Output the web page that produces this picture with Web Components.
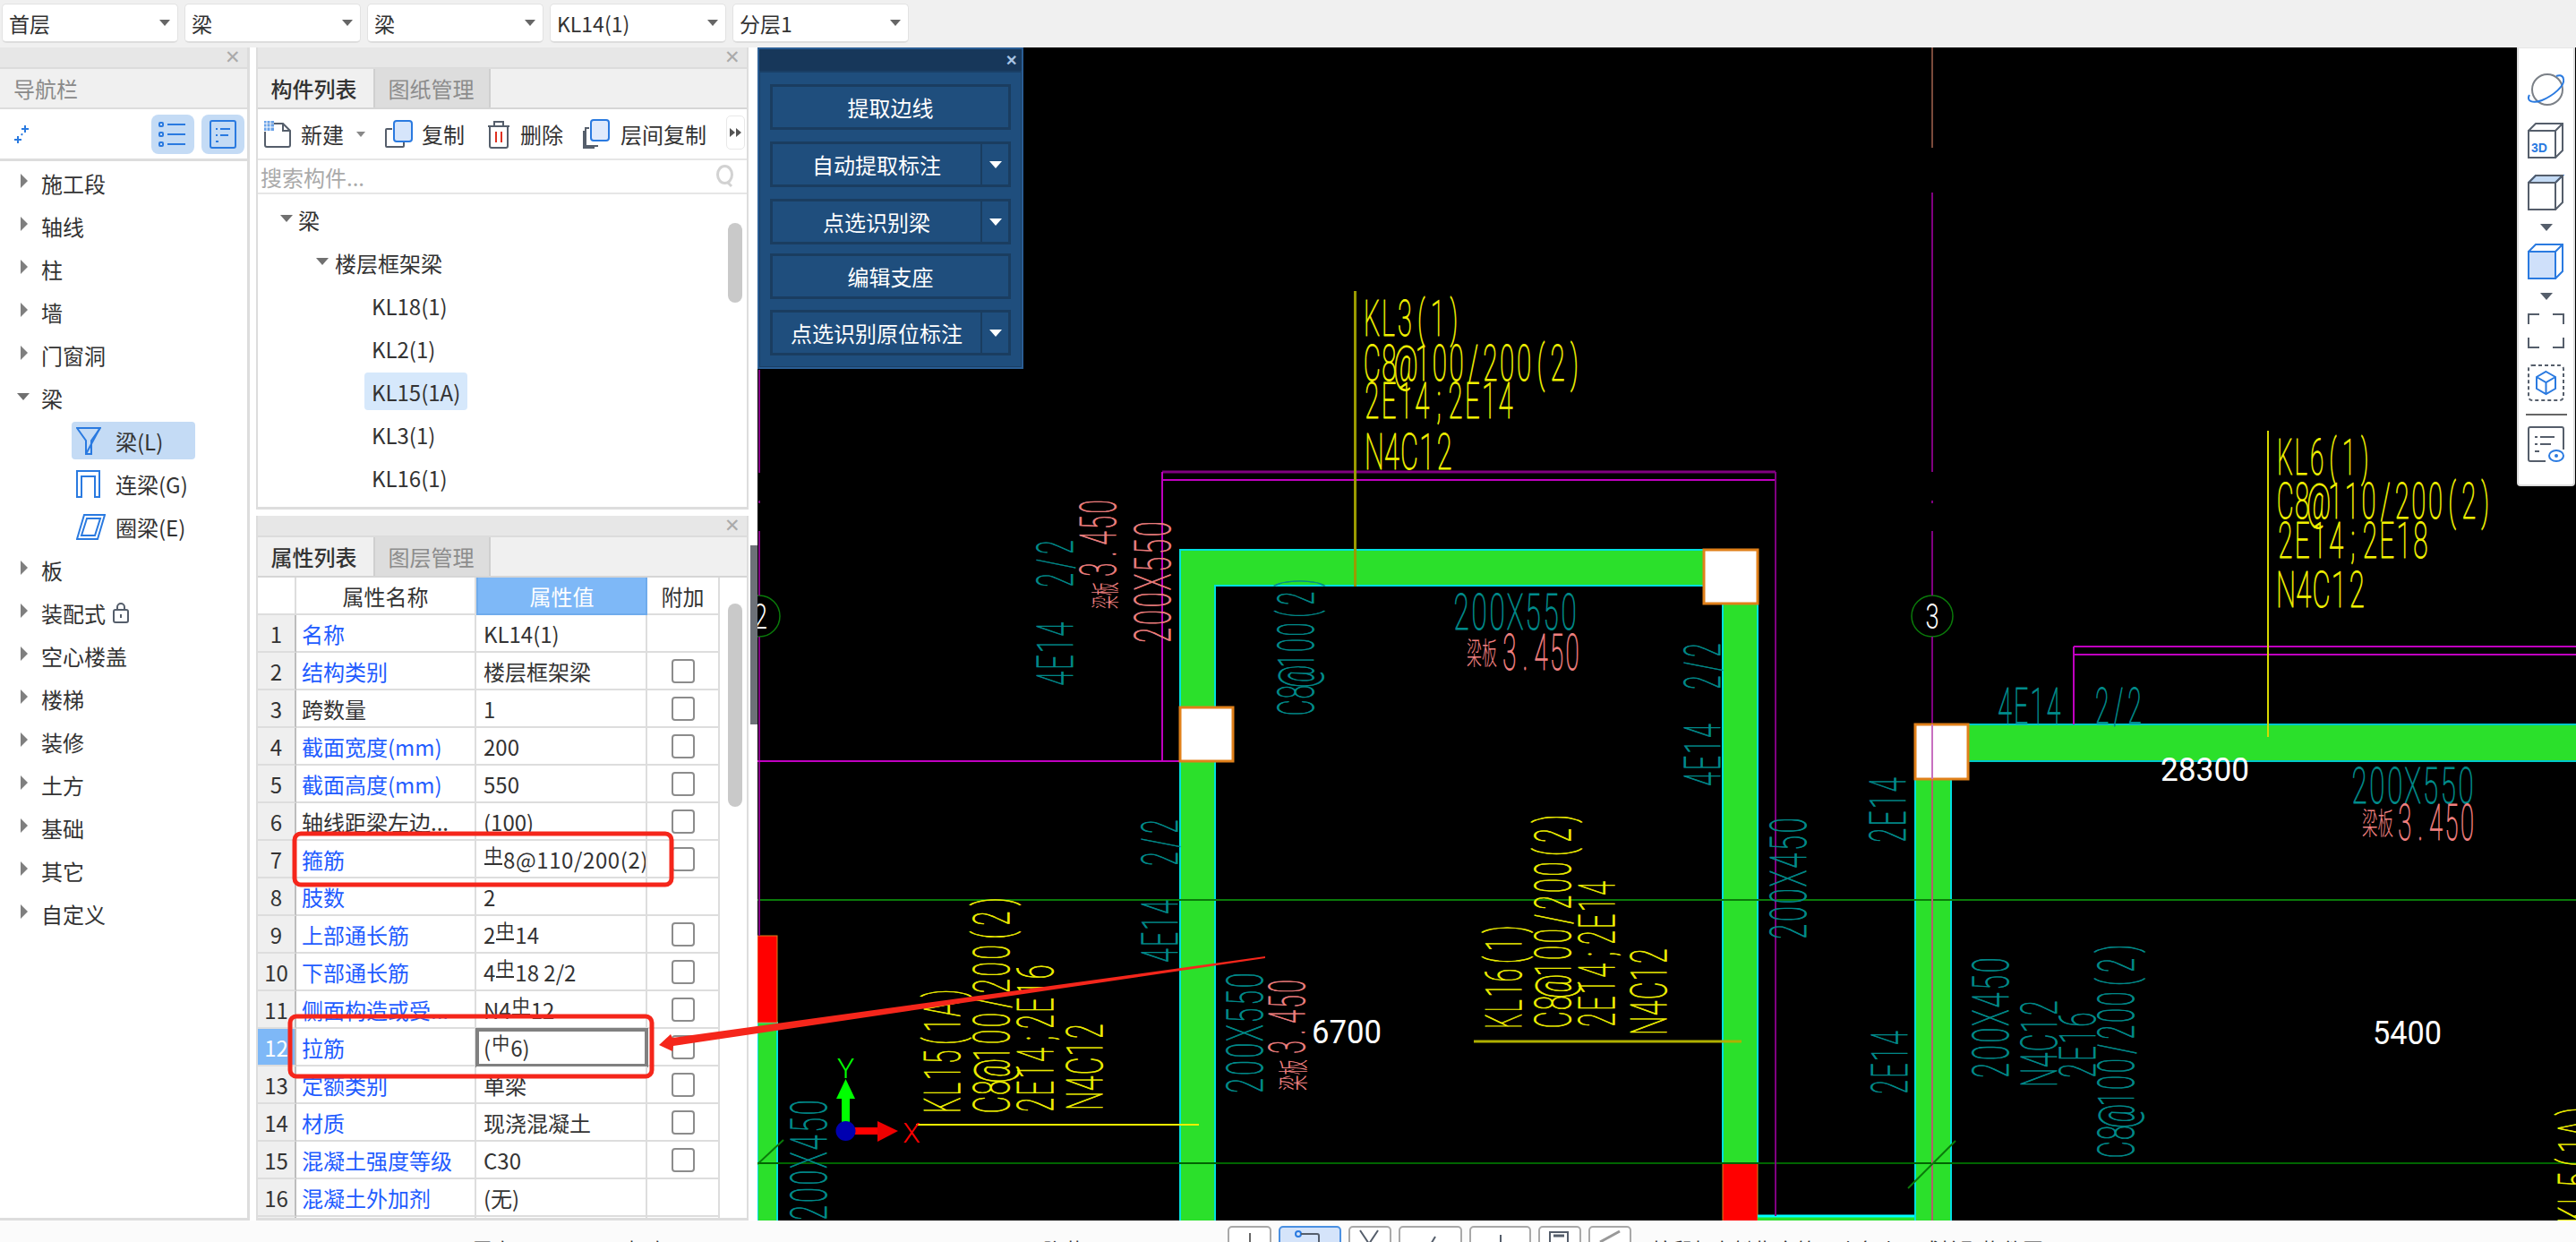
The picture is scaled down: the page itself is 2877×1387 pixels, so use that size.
<!DOCTYPE html>
<html lang="zh"><head><meta charset="utf-8"><title>GTJ</title>
<style>
html,body{margin:0;padding:0;width:2877px;height:1387px;overflow:hidden;background:#fff;font-family:"Noto Sans CJK SC","Liberation Sans",sans-serif;color:#333;}
</style></head><body>
<gtj-app>
  <gtj-topbar slot="top">
    <gtj-select>首层</gtj-select><gtj-select>梁</gtj-select><gtj-select>梁</gtj-select><gtj-select>KL14(1)</gtj-select><gtj-select>分层1</gtj-select>
  </gtj-topbar>
  <gtj-nav slot="nav"></gtj-nav>
  <gtj-mid slot="mid">
    <gtj-panel tabs="构件列表,图纸管理" style="height:516px;flex:none">
      <gtj-toolbar></gtj-toolbar>
      <gtj-search></gtj-search>
      <gtj-comp-tree></gtj-comp-tree>
    </gtj-panel>
    <gtj-panel tabs="属性列表,图层管理" style="flex:1;min-height:0">
      <gtj-prop-table></gtj-prop-table>
    </gtj-panel>
  </gtj-mid>
  <gtj-rail slot="rail"></gtj-rail>
  <gtj-canvas slot="canvas">
    <gtj-float-panel></gtj-float-panel>
    <gtj-view-strip></gtj-view-strip>
  </gtj-canvas>
  <gtj-status slot="status"></gtj-status>
  <gtj-annotations slot="over"></gtj-annotations>
</gtj-app>
<script>
const FONT='"Noto Sans CJK SC","Liberation Sans",sans-serif';
const INK='#555e6b',BLUE='#2a7ae0';
function shadow(el,html){el.attachShadow({mode:'open'}).innerHTML=html;return el.shadowRoot;}
const def=(n,c)=>customElements.define(n,c);

def('gtj-app',class extends HTMLElement{connectedCallback(){shadow(this,`<style>
:host{display:grid;position:relative;width:2877px;height:1387px;overflow:hidden;background:#fff;grid-template-columns:279px 7px 550px 10px 2031px;grid-template-rows:53px 1310px 24px;font:23px ${FONT};color:#333}
::slotted([slot=top]){grid-column:1/-1;grid-row:1}
::slotted([slot=nav]){grid-column:1;grid-row:2}
::slotted([slot=mid]){grid-column:3;grid-row:2}
::slotted([slot=rail]){grid-column:4;grid-row:2}
::slotted([slot=canvas]){grid-column:5;grid-row:2}
::slotted([slot=status]){grid-column:1/-1;grid-row:3}
</style><slot name="top"></slot><slot name="nav"></slot><slot name="mid"></slot><slot name="rail"></slot><slot name="canvas"></slot><slot name="status"></slot><slot name="over"></slot>`)}});

def('gtj-topbar',class extends HTMLElement{connectedCallback(){shadow(this,`<style>:host{display:flex;gap:7px;background:#f0f0f0;padding:4px 0 0 2px;box-sizing:border-box;height:53px}</style><slot></slot>`)}});
def('gtj-select',class extends HTMLElement{connectedCallback(){shadow(this,`<style>:host{display:flex;align-items:center;box-sizing:border-box;width:197px;height:44px;background:#fff;border:1px solid #e2e2e2;border-bottom:2px solid #ddd;border-radius:5px;padding:0 8px 0 7px;justify-content:space-between;font:23px ${FONT};color:#333}
i{width:0;height:0;border:6px solid transparent;border-top:7px solid #666;border-bottom:0;margin-right:0}</style><slot></slot><i></i>`)}});

const NAVICONS={
 l:`<svg width="28" height="31" viewBox="0 0 28 31" fill="none" stroke="${BLUE}" stroke-width="2"><path d="M1 1H27L17 15V30H11V15Z"/><path d="M26 2 11 30"/></svg>`,
 g:`<svg width="27" height="31" viewBox="0 0 27 31" fill="none" stroke="${BLUE}" stroke-width="2"><path d="M1 30V1H26V30H21V7H6V30Z"/></svg>`,
 e:`<svg width="33" height="29" viewBox="0 0 33 29" fill="none" stroke="${BLUE}" stroke-width="2"><path d="M1 28 9 1H32L24 28Z"/><path d="M6 24 12 5H27L21 24Z"/></svg>`};
const LOCK=`<svg width="18" height="23" viewBox="0 0 18 23" fill="none" stroke="${INK}" stroke-width="2" style="margin-left:8px"><rect x="1" y="8" width="16" height="14" rx="2"/><path d="M5 8V5a4 4 0 0 1 8 0v3"/><path d="M9 13v4"/></svg>`;
def('gtj-nav',class extends HTMLElement{connectedCallback(){
 const it=(t,o)=>`<gtj-tree-item arrow="${o==='open'?'open':'closed'}" style="--arrow-x:${o==='open'?19:23}px;--text-x:46px">${t}</gtj-tree-item>`;
 const sub=(k,t,s)=>`<div class="sub ${s?'sel':''}"><span class="ic">${NAVICONS[k]}</span>${t}</div>`;
 shadow(this,`<style>:host{display:flex;flex-direction:column;box-sizing:border-box;height:1310px;border-right:3px solid #ddd;border-bottom:3px solid #ddd;background:#fff;font:24px ${FONT};color:#333;overflow:hidden}
.title{height:24px;background:#e7e7e7;border-bottom:2px solid #dcdcdc;box-sizing:border-box;display:flex;justify-content:flex-end;align-items:center;padding-right:7px;color:#aaa;font:21px "Liberation Sans",sans-serif;flex:none}
.head{height:43px;background:#f0f0f0;border-bottom:2px solid #ddd;color:#8a8a8a;padding-left:15px;display:flex;align-items:center;flex:none;box-sizing:content-box}
.tb{height:55px;border-bottom:3px solid #ddd;display:flex;align-items:center;padding:0 3px 0 15px;flex:none}
.tb b{width:48px;height:44px;background:#c4dbf5;border-radius:8px;margin-left:8px;display:flex;align-items:center;justify-content:center}
.tb b:first-of-type{margin-left:auto}
.list{display:flex;flex-direction:column}
.sub{display:flex;align-items:center;height:42px;margin:3px 0 3px 80px;width:138px;border-radius:4px;padding-left:5px;box-sizing:border-box;white-space:nowrap;color:#333}
.sub.sel{background:#c4dbf5}
.ic{width:44px;flex:none;display:flex;align-items:center}
</style>
<div class="title"><span>✕</span></div>
<div class="head">导航栏</div>
<div class="tb"><svg width="18" height="22" viewBox="0 0 18 22" fill="none" stroke="${BLUE}" stroke-width="2"><path d="M13 1v8M9 5h8M5 13v8M1 17h8"/><path d="M9 12l1-2" stroke-dasharray="2 2"/></svg>
<b><svg width="32" height="32" viewBox="0 0 32 32" fill="none" stroke="${BLUE}" stroke-width="2"><rect x="1" y="3" width="4" height="4" rx="1"/><rect x="1" y="14" width="4" height="4" rx="1"/><rect x="1" y="25" width="4" height="4" rx="1"/><path d="M10 5h20M10 16h20M10 27h20"/></svg></b>
<b><svg width="30" height="32" viewBox="0 0 30 32" fill="none" stroke="${BLUE}" stroke-width="2"><rect x="1" y="1" width="28" height="30" rx="2"/><path d="M7 10h2M12 10h11M7 17h2M12 17h9M7 24h3"/></svg></b></div>
<div class="list">
${['施工段','轴线','柱','墙','门窗洞'].map(t=>it(t)).join('')}
${it('梁','open')}
${sub('l','梁(L)',1)}${sub('g','连梁(G)')}${sub('e','圈梁(E)')}
${it('板')}
<gtj-tree-item arrow="closed" style="--arrow-x:23px;--text-x:46px">装配式${LOCK}</gtj-tree-item>
${['空心楼盖','楼梯','装修','土方','基础','其它','自定义'].map(t=>it(t)).join('')}
</div>`)}});

def('gtj-tree-item',class extends HTMLElement{connectedCallback(){
 const a=this.getAttribute('arrow');
 const ar=a==='open'?`<i class="o"></i>`:a==='closed'?`<i class="c"></i>`:'';
 shadow(this,`<style>:host{display:flex;align-items:center;height:48px;flex:none;position:relative;padding-left:var(--text-x,46px);box-sizing:border-box;white-space:nowrap;font:24px ${FONT};color:#333}
i{position:absolute;left:var(--arrow-x,23px);top:50%;width:0;height:0}
.c{border:8px solid transparent;border-left:8px solid #7f7f7f;border-right:0;margin-top:-10px}
.o{border:7px solid transparent;border-top:8px solid #707070;border-bottom:0;margin-top:-5px}
.sel{background:#d6e8fb;height:42px;display:flex;align-items:center;padding:0 8px;margin-left:-8px;border-radius:4px}
</style>${ar}${this.hasAttribute('selected')?'<span class="sel"><slot></slot></span>':'<slot></slot>'}`)}});

def('gtj-mid',class extends HTMLElement{connectedCallback(){shadow(this,`<style>:host{display:flex;flex-direction:column;gap:7px;height:1310px;box-sizing:border-box;background:#fff}</style><slot></slot>`)}});

def('gtj-panel',class extends HTMLElement{connectedCallback(){
 const [a,b]=this.getAttribute('tabs').split(',');
 shadow(this,`<style>:host{display:flex;flex-direction:column;box-sizing:border-box;border:solid #ddd;border-width:0 2px 3px 2px;background:#fff;overflow:hidden;position:relative;font:24px ${FONT}}
.title{height:24px;background:#e7e7e7;border-bottom:2px solid #dcdcdc;box-sizing:border-box;display:flex;justify-content:flex-end;align-items:center;padding-right:7px;color:#aaa;font:21px "Liberation Sans",sans-serif;flex:none}
.tabs{height:45px;box-sizing:border-box;background:#f0f0f0;border-bottom:2px solid #d6d6d6;display:flex;flex:none}
.tab{width:129px;display:flex;align-items:center;justify-content:center;box-sizing:border-box;font-weight:500;color:#333;padding-right:4px}
.tab.off{width:131px;background:#ddd;color:#8c8c8c;border:solid #cfcfcf;border-width:0 2px 0 2px;font-weight:400;padding-right:2px}
</style><div class="title"><span>✕</span></div><div class="tabs"><div class="tab">${a}</div><div class="tab off">${b}</div></div><slot></slot>`)}});

const TI={
 nw:`<svg width="31" height="30" viewBox="0 0 31 30" fill="none" stroke="${INK}" stroke-width="2"><path d="M3 3H21L29 11V27a2 2 0 0 1-2 2H3a2 2 0 0 1-2-2V12"/><path d="M21 3V11H29"/><rect x="0" y="0" width="11" height="11" fill="${BLUE}" stroke="none" opacity=".7"/><path d="M0 3h11M0 7h11M3 0v11M7 0v11" stroke="#fff" stroke-width="1"/></svg>`,
 cp:`<svg width="31" height="31" viewBox="0 0 31 31" fill="none" stroke-width="2"><path d="M8 10H2a1 1 0 0 0-1 1V29a1 1 0 0 0 1 1H20a1 1 0 0 0 1-1V24" stroke="${INK}"/><rect x="10" y="1" width="20" height="23" rx="3" fill="#d6e5fb" stroke="${BLUE}"/></svg>`,
 dl:`<svg width="26" height="32" viewBox="0 0 26 32" fill="none" stroke="${INK}" stroke-width="2"><path d="M1 7H25M8 7V2H18V7M3 7V29a2 2 0 0 0 2 2H21a2 2 0 0 0 2-2V7"/><path d="M10 13V25M16 13V25" stroke="#e03020"/></svg>`,
 cc:`<svg width="30" height="33" viewBox="0 0 30 33" fill="none" stroke-width="2"><path d="M7 10H3V30H17" stroke="${INK}"/><path d="M4 14H1V32H13" stroke="${INK}"/><rect x="9" y="1" width="20" height="23" rx="3" fill="#dfeafc" stroke="${BLUE}"/></svg>`};
def('gtj-toolbar',class extends HTMLElement{connectedCallback(){shadow(this,`<style>:host{display:flex;align-items:center;height:55px;flex:none;border-bottom:2px solid #e6e6e6;padding-left:7px;font:24px ${FONT};color:#333;position:relative}
span{white-space:nowrap}
.ar{width:0;height:0;border:5px solid transparent;border-top:6px solid #888;border-bottom:0;margin-left:14px}
.more{position:absolute;left:523px;top:7px;width:21px;height:38px;box-sizing:border-box;border:1px solid #e8e8e8;border-radius:5px;display:flex;align-items:center;justify-content:center;gap:1px}
.more i{width:0;height:0;border:5px solid transparent;border-left:6px solid #555;border-right:0}
</style>${TI.nw}<span style="margin-left:10px">新建</span><i class="ar"></i><span style="margin-left:22px;display:flex">${TI.cp}</span><span style="margin-left:10px">复制</span><span style="margin-left:25px;display:flex">${TI.dl}</span><span style="margin-left:11px">删除</span><span style="margin-left:22px;display:flex">${TI.cc}</span><span style="margin-left:12px">层间复制</span><div class="more"><i></i><i></i></div>`)}});
def('gtj-search',class extends HTMLElement{connectedCallback(){shadow(this,`<style>:host{display:flex;align-items:center;justify-content:space-between;height:36px;flex:none;border-bottom:2px solid #e6e6e6;padding:0 14px 0 3px;font:24px ${FONT};color:#aaa}</style><span>搜索构件...</span><svg width="20" height="26" viewBox="0 0 20 26" fill="none" stroke="#d2d2d2" stroke-width="3"><ellipse cx="9.5" cy="11" rx="8" ry="9.5"/><path d="M13 20l4 4"/></svg>`)}});
def('gtj-comp-tree',class extends HTMLElement{connectedCallback(){
 const leaf=(t,s)=>`<gtj-tree-item style="--text-x:127px" ${s?'selected':''}>${t}</gtj-tree-item>`;
 shadow(this,`<style>:host{display:block;flex:1;min-height:0;position:relative;overflow:hidden;padding-top:4px;background:#fff}
.sb{position:absolute;left:525px;top:32px;width:16px;height:89px;border-radius:8px;background:#c9c9c9}</style>
<gtj-tree-item arrow="open" style="--arrow-x:25px;--text-x:45px">梁</gtj-tree-item>
<gtj-tree-item arrow="open" style="--arrow-x:65px;--text-x:86px">楼层框架梁</gtj-tree-item>
${leaf('KL18(1)')}${leaf('KL2(1)')}${leaf('KL15(1A)',1)}${leaf('KL3(1)')}${leaf('KL16(1)')}
<div class="sb"></div>`)}});

const R=`<span class="r u">中</span>`;
const ROWS=[
['名称','KL14(1)',0,1],['结构类别','楼层框架梁',1,1],['跨数量','1',1,0],['截面宽度(mm)','200',1,1],['截面高度(mm)','550',1,1],
['轴线距梁左边...','(100)',1,0],['箍筋',R+'<span style="letter-spacing:.6px">8@110/200(2)</span>',1,1],['肢数','2',0,1],['上部通长筋','2'+R+'14',1,1],['下部通长筋','4'+R+'18 2/2',1,1],
['侧面构造或受...','N4'+R+'12',1,1],['拉筋','(<span class="r">中</span>6)',1,1],['定额类别','单梁',1,1],['材质','现浇混凝土',1,1],['混凝土强度等级','C30',1,1],['混凝土外加剂','(无)',0,1],['','',0,0]];
def('gtj-prop-table',class extends HTMLElement{connectedCallback(){
 const rows=ROWS.map((r,i)=>{const n=i+1,sel=n===12;return `<div class="c idx ${sel?'si':''}">${n}</div><div class="c nm ${r[3]?'bl':''}">${r[0]}</div><div class="c val ${sel?'sv':''}">${r[1]}</div><div class="c add">${r[2]?'<b></b>':''}</div>`}).join('');
 shadow(this,`<style>:host{display:block;flex:1;min-height:0;position:relative;overflow:hidden;background:#fff;font:24px ${FONT};color:#333}
.g{display:grid;grid-template-columns:43px 201px 191px 81px;grid-auto-rows:42px;width:516px}
.c{box-sizing:border-box;border-right:2px solid #ddd;border-bottom:2px solid #ddd;display:flex;align-items:center;white-space:nowrap;overflow:hidden;background:#fff}
.h{justify-content:center;color:#333}.hv{background:#7eb8f7;color:#fff;border-color:#6aa8ea;border:2px solid #6fabec;border-top:0}
.idx{background:#efefef;justify-content:center;border-right-color:#bdbdbd;font-size:24px}
.si{background:#7eb8f7;color:#fff}
.nm{padding-left:6px}.bl{color:#1f5cff}
.val{padding-left:8px;position:relative}
.sv{outline:4px solid #808080;outline-offset:-3px}
.add{justify-content:center}
.add b{display:block;width:26px;height:27px;box-sizing:border-box;border:2px solid #8c8c8c;border-radius:4px;background:#fff}
.r{font-size:20px;position:relative;top:-4px;line-height:22px;margin:0 1px}
.r.u{box-shadow:inset 0 -2px 0 #333;}
.sb{position:absolute;left:525px;top:29px;width:16px;height:227px;border-radius:8px;background:#c9c9c9}
</style><div class="g"><div class="c h"></div><div class="c h">属性名称</div><div class="c h hv">属性值</div><div class="c h">附加</div>${rows}</div><div class="sb"></div>`)}});

def('gtj-rail',class extends HTMLElement{connectedCallback(){shadow(this,`<style>:host{display:block;position:relative;background:#fff;height:100%}
i{position:absolute;left:2px;right:0;top:556px;height:200px;background:#6d7178}</style><i></i>`)}});

def('gtj-canvas',class extends HTMLElement{connectedCallback(){
 const s=[];
 const L=(x1,y1,x2,y2,c,w=2)=>s.push(`<line x1="${x1}" y1="${y1}" x2="${x2}" y2="${y2}" stroke="${c}" stroke-width="${w}"/>`);
 // CAD lettering: every glyph sits in an equal cell, like an SHX stroke font
 const T=(t,x,y,len,c,rot)=>{const n=t.length,adv=len/n,sx=adv*.88/31.4,xs=[];for(let i=0;i<n;i++)xs.push(((i+.5)*adv/sx).toFixed(1));
  s.push(`<text transform="translate(${x} ${y})${rot?' rotate(-90)':''} scale(${sx.toFixed(3)} 1)" x="${xs.join(' ')}" y="0" text-anchor="middle" font-size="56" fill="${c}" stroke="${c}" stroke-width="1" style="white-space:pre">${t}</text>`)};
 const Z=(x,y,len,size,c,rot)=>s.push(`<text transform="translate(${x} ${y})${rot?' rotate(-90)':''}" textLength="${len}" lengthAdjust="spacingAndGlyphs" font-size="${size}" fill="${c}" style="font-family:'Noto Sans CJK SC',sans-serif;font-weight:300">梁板</text>`);
 const Y='#f0f000',TE='#008c8c',P='#f08080',W='#fff',MG='#c000c0',PU='#800080',G2='#0a7a0a',GD='#006400';
 const GR='#2be02b',CY='#00e0e0',OR='#e0801a';
 s.push(`<path d="M1318 1372V614H1903V654H1357V1372Z" fill="${GR}" stroke="${CY}" stroke-width="2"/>`);
 T('C8@100(2)',1467,799,157,TE,1);
 s.push(`<rect x="1924" y="674" width="39" height="625" fill="${GR}" stroke="${CY}" stroke-width="2"/>`);
 s.push(`<rect x="1924" y="1299" width="39" height="70" fill="#f00" stroke="${OR}" stroke-width="1"/>`);
 s.push(`<rect x="1963" y="1358" width="176" height="10" fill="${GR}"/>`);L(1963,1358,2139,1358,'#00ffff',3);
 s.push(`<rect x="2139" y="870" width="40" height="500" fill="${GR}" stroke="${CY}" stroke-width="2"/>`);
 s.push(`<rect x="2198" y="809" width="700" height="41" fill="${GR}" stroke="#00c8c8" stroke-width="2"/>`);
 s.push(`<rect x="846" y="1142" width="22" height="230" fill="${GR}" stroke="${CY}" stroke-width="2"/>`);
 s.push(`<rect x="846" y="1045" width="22" height="97" fill="#f00" stroke="${OR}" stroke-width="1"/>`);
 L(846,1005,2877,1005,G2);L(846,1299,2877,1299,GD,2);
 L(2158,53,2158,165,'#7a4a3a');L(2158,215,2158,527,PU);L(2158,559,2158,562,PU);L(2158,593,2158,809,PU);
 L(848,413,848,528,PU);L(848,559,848,562,PU);L(848,593,848,1045,PU);
 L(2158,870,2158,1363,'#b0606a');
 L(1298,527,1983,527,PU,3);L(1298,536,1983,536,MG);L(1298,527,1298,850,MG);L(846,850,1318,850,MG);L(1983,527,1983,1358,PU);
 L(2316,722,2877,722,MG);L(2316,731,2877,731,MG);L(2316,722,2316,809,MG);
 for(const [x,y,w,h] of [[1318,790,59,60],[1903,614,60,60],[2139,809,59,61]])
  s.push(`<rect x="${x}" y="${y}" width="${w}" height="${h}" fill="#fff" stroke="${OR}" stroke-width="3"/>`);
 L(2158,809,2158,870,'#c870c0');
 for(const [x,y,l] of [[848,688,'2'],[2158,688,'3']]){
  s.push(`<circle cx="${x}" cy="${y}" r="23" fill="#000" stroke="#0a7a0a" stroke-width="1.5"/>`);
  L(x,y+23,x,y+40,PU);L(x,y-40,x,y-23,PU);
  s.push(`<text x="${x+(l==='2'?2:0)}" y="${y+14}" text-anchor="middle" font-size="38" fill="#fff" transform="translate(${x} 0) scale(.72 1) translate(${-x} 0)" style="font-weight:300">${l}</text>`);}
 L(1513.5,325,1513.5,655,'#9a9a00',3);L(2533,481,2533,823,'#d8d800');L(1023,1256,1339,1256,'#f0f000');L(1646,1163,1945,1163,'#b0b000',3);
 L(2184,1274,2131,1327,G2);L(875,1273,846,1300,'#0a7a0a');
 T('KL3(1)',1523,375,110,Y);T('C8@100/200(2)',1523,425,245,Y);T('2E14;2E14',1523,467,168,Y);T('N4C12',1525,524,98,Y);
 T('KL6(1)',2543,530,107,Y);T('C8@110/200(2)',2543,579,242,Y);T('2E14;2E18',2543,623,170,Y);T('N4C12',2543,678,99,Y);
 T('KL15(1A)',1072,1243,143,Y,1);T('C8@100/200(2)',1127,1243,246,Y,1);T('2E14;2E16',1176,1243,167,Y,1);T('N4C12',1231,1239,97,Y,1);
 T('KL16(1)',1699,1149,120,Y,1);T('C8@100/200(2)',1754,1148,243,Y,1);T('2E14;2E14',1803,1148,165,Y,1);T('N4C12',1861,1155,97,Y,1);
 T('KL5(1A)',2897,1366,135,Y,1);
 T('4E14  2/2',1198,767,165,TE,1);T('200X550',1622,703,140,TE);T('4E14  2/2',1921,879,162,TE,1);T('4E14  2/2',1315,1076,162,TE,1);
 T('2E14',2128,942,75,TE,1);T('2E14',2130,1223,73,TE,1);T('200X450',2017,1050,138,TE,1);T('4E14  2/2',2230,808,163,TE);
 T('200X550',1410,1222,137,TE,1);T('200X450',923,1364,137,TE,1);T('200X450',2243,1205,137,TE,1);T('N4C12',2297,1213,97,TE,1);T('2E16',2340,1205,76,TE,1);T('C8@100/200(2)',2383,1293,243,TE,1);
 T('200X550',2625,897,139,TE);
 T('200X550',1307,719,138,P,1);
 Z(1246,680,30,32,P,1);T('3.450',1246,645,88,P,1);
 Z(1638,742,34,34,P);T('3.450',1677,748,88,P);
 Z(1457,1218,35,34,P,1);T('3.450',1457,1178,85,P,1);
 Z(2638,932,35,34,P);T('3.450',2677,938,87,P);
 const D=(t,x,y,len)=>s.push(`<text x="${x}" y="${y}" textLength="${len}" lengthAdjust="spacingAndGlyphs" font-size="36" fill="${W}" style="font-weight:400">${t}</text>`);
 D('28300',2413,872,99);D('6700',1465,1165,78);D('5400',2650,1166,77);
 s.push(`<rect x="940" y="1226" width="9" height="37" fill="#0f0"/><path d="M934 1227 944.5 1205 955 1227Z" fill="#0f0"/>`);
 s.push(`<rect x="944" y="1259" width="38" height="8" fill="#f00"/><path d="M980 1252 1003 1263 980 1275Z" fill="#e00"/>`);
 s.push(`<circle cx="944.5" cy="1263" r="11" fill="#0000b0"/>`);
 s.push(`<text x="944.5" y="1204" text-anchor="middle" font-size="32" fill="#0f0" style="font-weight:300">Y</text>`);
 s.push(`<text x="1018" y="1276" text-anchor="middle" font-size="32" fill="#f00" style="font-weight:300">X</text>`);
 shadow(this,`<style>:host{display:block;position:relative;background:#000;overflow:hidden;height:1310px}
svg{display:block;position:absolute;left:0;top:0;font-family:Roboto,"Liberation Sans",sans-serif;font-weight:100}
</style><svg width="2031" height="1310" viewBox="846 53 2031 1310">${s.join('')}</svg><slot></slot>`)}});

def('gtj-float-panel',class extends HTMLElement{connectedCallback(){
 const b=(t,sp,m='')=>`<div class="b" style="${m}"><div class="m">${t}</div>${sp?'<div class="s"><i></i></div>':''}</div>`;
 shadow(this,`<style>:host{position:absolute;left:0;top:0;width:297px;height:359px;box-sizing:border-box;background:#1f4e7d;border:2px solid #2a5d94;box-shadow:inset 0 0 0 1px #1a3f66;font:24px ${FONT};color:#fff;display:flex;flex-direction:column}
.t{height:24px;flex:none;background:#17375a;border-bottom:2px solid #1a3f66;color:#a8c4e4;display:flex;justify-content:flex-end;align-items:center;padding-right:5px;font:bold 16px "Liberation Sans",sans-serif}
.l{display:flex;flex-direction:column;gap:13px;padding:13px 12px 0 12px}
.b{height:51px;box-sizing:border-box;border:3px solid #1a3d60;display:flex;background:#1f4e7d}
.m{flex:1;display:flex;align-items:center;justify-content:center;white-space:nowrap}
.s{width:31px;border-left:2px solid #1a3d60;display:flex;align-items:center;justify-content:center;box-sizing:border-box}
.s i{width:0;height:0;border:7px solid transparent;border-top:8px solid #fff;border-bottom:0}
</style><div class="t">✕</div><div class="l">${b('提取边线')}${b('自动提取标注',1)}${b('点选识别梁',1)}${b('编辑支座',0,'margin-top:-3px')}${b('点选识别原位标注',1,'margin-top:-1px')}</div>`)}});

def('gtj-view-strip',class extends HTMLElement{connectedCallback(){
 const cube=(inner='',top='',stroke=INK)=>`<svg width="41" height="41" viewBox="0 0 41 41" fill="none" stroke="${stroke}" stroke-width="2">${top}<path d="M1 9H31V39H1ZM1 9 9 1H39V31L31 39M31 9 39 1"/>${inner}</svg>`;
 const tri=`<i></i>`;
 shadow(this,`<style>:host{position:absolute;left:1965px;top:0;width:65px;height:490px;box-sizing:border-box;background:#fff;border:2px solid #ddd;border-top:1px solid #e6e6e6;border-radius:0 0 4px 4px;display:flex;flex-direction:column;align-items:center;padding-top:28px}
svg{display:block;flex:none}
i{display:block;width:0;height:0;border:7px solid transparent;border-top:8px solid ${INK};border-bottom:0;margin:14px 0 14px;flex:none}
hr{border:0;height:2px;background:#666;width:46px;margin:14px 0 12px;flex:none}
</style>
<svg width="41" height="37" viewBox="0 0 41 37" fill="none" stroke-width="2" style="margin-bottom:18px"><circle cx="22" cy="18" r="17" stroke="#7b8087"/><path d="M2 24C-2 31 6 34 16 30 28 25 42 14 40 6 39 1 34 2 32 3" stroke="${BLUE}"/></svg>
${cube(`<text x="4" y="33" font-size="14" font-weight="700" stroke="none" fill="${BLUE}" font-family="Liberation Sans">3D</text>`)}
<div style="height:17px"></div>
${cube('',`<path d="M1 9 9 1H39L31 9Z" fill="#c4dbf5" stroke="none"/><path d="M1 9 9 1H39L31 9Z" stroke="${BLUE}"/>`)}
${tri}
<svg width="41" height="41" viewBox="0 0 41 41" fill="none" stroke="${BLUE}" stroke-width="2"><path d="M1 9H31V39H1Z" fill="#cfe0fa"/><path d="M1 9 9 1H39V31L31 39M31 9 39 1"/></svg>
${tri}
<svg width="41" height="41" viewBox="0 0 41 41" fill="none" stroke="${INK}" stroke-width="2"><path d="M1 13V2H13M28 2H40V13M40 28V39H28M13 39H1V28"/></svg>
<div style="height:17px"></div>
<svg width="41" height="41" viewBox="0 0 41 41" fill="none" stroke-width="2"><rect x="1" y="1" width="39" height="39" rx="4" stroke="${INK}" stroke-dasharray="4 3"/><path d="M20.5 8 31 14V27L20.5 33 10 27V14ZM10 14 20.5 20 31 14M20.5 20V33" stroke="${BLUE}"/></svg>
<hr>
<svg width="41" height="41" viewBox="0 0 41 41" fill="none" stroke-width="2"><path d="M20 39H3a2 2 0 0 1-2-2V3a2 2 0 0 1 2-2H38a2 2 0 0 1 2 2V26" stroke="${INK}"/><path d="M8 12h3M14 12h16M8 20h3M14 20h12M8 28h5" stroke="${INK}"/><ellipse cx="32" cy="33" rx="8" ry="6" stroke="${BLUE}"/><circle cx="32" cy="33" r="2" fill="${BLUE}" stroke="none"/></svg>`)}});

def('gtj-status',class extends HTMLElement{connectedCallback(){
 const btn=(w,inner,sel)=>`<div class="bt ${sel?'se':''}" style="width:${w}px">${inner}</div>`;
 shadow(this,`<style>:host{display:flex;position:relative;height:24px;background:#fbfbfb;overflow:hidden;font:23px ${FONT};color:#333;white-space:nowrap}
.txt{position:absolute;top:16px;line-height:32px;margin:0}
.bts{position:absolute;left:1371px;top:6px;display:flex;gap:8px}
.bt{height:40px;box-sizing:border-box;border:2px solid #a8a8a8;border-radius:5px 5px 0 0;background:#fff;display:flex;justify-content:center}
.bt.se{background:#d5e4fa;border-color:#4a90e2}
</style>
<span class="txt" style="left:0">X = 18144 Y = 12423</span>
<span class="txt" style="left:527px">层高：3.14</span>
<span class="txt" style="left:700px">标高：-0.06~3.14</span>
<span class="txt" style="left:1000px">0</span>
<span class="txt" style="left:1165px">隐藏：0</span>
<div class="bts">
${btn(49,'<svg width="20" height="20" fill="none" stroke="#666" stroke-width="2"><path d="M10 6V20"/></svg>')}
${btn(70,`<svg width="40" height="20" fill="none" stroke-width="2"><circle cx="7" cy="7" r="3" stroke="${BLUE}"/><path d="M10 7H28a2 2 0 0 1 2 2V20" stroke="${INK}"/></svg>`,1)}
${btn(48,`<svg width="30" height="20" fill="none" stroke="${INK}" stroke-width="2"><path d="M4 3 14 18 24 3"/></svg>`)}
${btn(71,`<svg width="30" height="20" fill="none" stroke="${INK}" stroke-width="2"><path d="M20 10 14 20"/></svg>`)}
${btn(69,`<svg width="20" height="20" fill="none" stroke="${INK}" stroke-width="2"><path d="M10 8V20"/></svg>`)}
${btn(48,`<svg width="26" height="20" fill="none" stroke="${INK}" stroke-width="2"><path d="M2 20V5H22V20"/><path d="M6 9H18" stroke-width="3"/></svg>`)}
${btn(48,`<svg width="30" height="20" fill="none" stroke="#999" stroke-width="3"><path d="M4 16 26 4"/></svg>`)}
</div>
<span class="txt" style="left:1845px">按鼠标左键指定第一个角点，或拾取构件图元</span>`)}});

def('gtj-annotations',class extends HTMLElement{connectedCallback(){shadow(this,`<style>:host{position:absolute;left:0;top:0;width:2877px;height:1387px;pointer-events:none}svg{display:block}</style>
<svg width="2877" height="1387" fill="none"><rect x="329" y="931" width="421" height="57" rx="7" stroke="#f5261b" stroke-width="5"/><rect x="324" y="1135" width="404" height="67" rx="7" stroke="#f5261b" stroke-width="5"/>
<path d="M1413 1068 751 1159 749 1155 736 1167 751 1174 752 1168 1413 1070Z" fill="#f5261b"/></svg>`)}});
</script>
</body></html>
